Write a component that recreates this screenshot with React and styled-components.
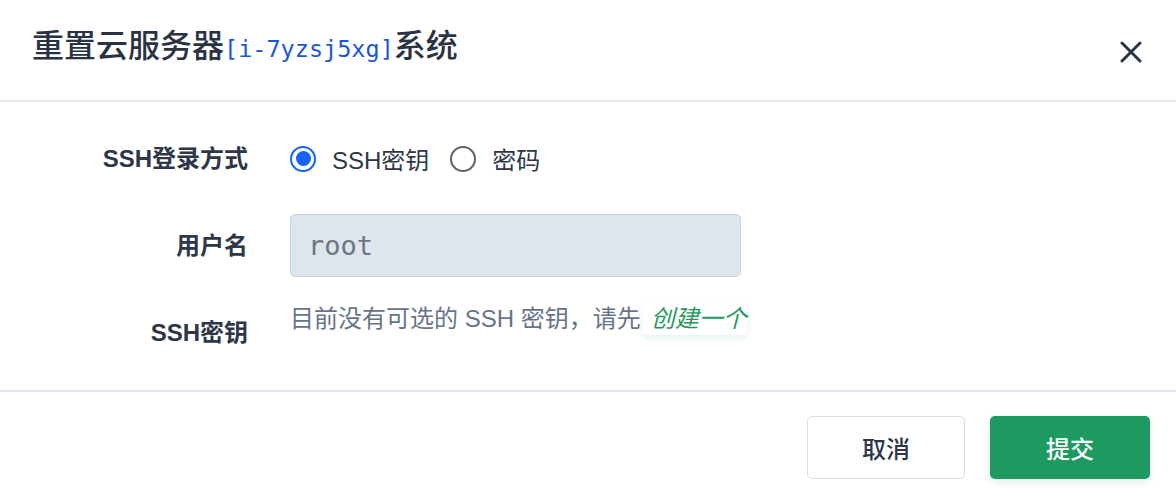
import React, { useState } from 'react';
import styled, { createGlobalStyle } from 'styled-components';

const GlobalStyle = createGlobalStyle`
  body {
    margin: 0;
    background: #fff;
    font-family: "Liberation Sans", "Noto Sans CJK SC", sans-serif;
    color: #2d3748;
  }
`;

const Modal = styled.div`
  width: 1176px;
  height: 488px;
  background: #fff;
  overflow: hidden;
`;

const ModalHeader = styled.div`
  height: 100px;
  padding: 0 32px;
  display: flex;
  align-items: center;
  justify-content: space-between;
  border-bottom: 2px solid #e0e7ee;
`;

const Title = styled.h2`
  margin: 0 0 6px;
  font-size: 32px;
  line-height: 44px;
  font-weight: 500;
  color: #2a3342;
`;

const InstanceId = styled.span`
  font-family: "DejaVu Sans Mono", monospace;
  font-size: 23.5px;
  font-weight: 400;
  color: #1b58d4;
`;

const CloseButton = styled.button`
  width: 32px;
  height: 32px;
  margin: 4px -3px 0 0;
  padding: 0;
  border: none;
  background: none;
  display: flex;
  align-items: center;
  justify-content: center;
  cursor: pointer;
`;

const ModalBody = styled.div`
  padding: 25px 0 26px;
`;

const Form = styled.div`
  display: grid;
  grid-template-columns: 248px 1fr;
  column-gap: 42px;
  row-gap: 24px;
`;

const Label = styled.div`
  text-align: right;
  font-size: 24px;
  font-weight: 600;
  color: #2d3748;
  line-height: 63px;
  height: 63px;
`;

const Control = styled.div`
  min-height: 63px;
  display: flex;
  align-items: ${(p) => (p.top ? 'flex-start' : 'center')};
`;

const RadioGroup = styled.div`
  display: flex;
  align-items: center;
`;

const RadioItem = styled.label`
  display: flex;
  align-items: center;
  font-size: 24px;
  color: #2d3748;
  cursor: pointer;
  & + & {
    margin-left: 21px;
  }
`;

const RadioDot = styled.span`
  box-sizing: border-box;
  width: 26px;
  height: 26px;
  border-radius: 50%;
  border: ${(p) => (p.checked ? '2.5px solid #1762f4' : '2px solid #5f6368')};
  margin-right: 16px;
  display: flex;
  align-items: center;
  justify-content: center;
  &::after {
    content: '';
    width: 15px;
    height: 15px;
    border-radius: 50%;
    background: ${(p) => (p.checked ? '#1762f4' : 'transparent')};
  }
`;

const TextInput = styled.input`
  box-sizing: border-box;
  width: 451px;
  height: 63px;
  padding: 0 17px;
  background: #dee5ec;
  border: 1.5px solid #c9d3dd;
  border-radius: 5px;
  font-family: "DejaVu Sans Mono", monospace;
  font-size: 27px;
  color: #6b7684;
  outline: none;
`;

const Hint = styled.div`
  font-size: 24px;
  line-height: 36px;
  color: #66748a;
`;

const CreateLink = styled.a`
  display: inline-block;
  margin-left: 2px;
  padding: 0 0 0 8px;
  line-height: 32px;
  font-style: italic;
  color: #1f9a5c;
  text-decoration: none;
  border-radius: 4px;
  box-shadow: 0 3px 6px rgba(31, 154, 92, 0.12);
  cursor: pointer;
`;

const ModalFooter = styled.div`
  border-top: 2px solid #e0e7ee;
  padding: 24px 26px 9px;
  display: flex;
  justify-content: flex-end;
  gap: 25px;
`;

const Button = styled.button`
  box-sizing: border-box;
  width: ${(p) => (p.primary ? '160px' : '158px')};
  height: 63px;
  border-radius: 5px;
  font-family: inherit;
  font-size: 24px;
  font-weight: 500;
  cursor: pointer;
  border: ${(p) => (p.primary ? 'none' : '1.5px solid #d5dde6')};
  background: ${(p) => (p.primary ? '#1e9a61' : '#fff')};
  color: ${(p) => (p.primary ? '#fff' : '#2d3748')};
  box-shadow: ${(p) => (p.primary ? '0 3px 8px rgba(30, 154, 97, 0.15)' : 'none')};
`;

const CloseIcon = () => (
  <svg width="22" height="22" viewBox="0 0 22 22">
    <path d="M2 2 L20 20 M20 2 L2 20" stroke="#2a3342" strokeWidth="3" strokeLinecap="round" />
  </svg>
);

const App = () => {
  const [method, setMethod] = useState('key');

  return (
    <Modal>
      <GlobalStyle />
      <ModalHeader>
        <Title>
          重置云服务器<InstanceId>[i-7yzsj5xg]</InstanceId>系统
        </Title>
        <CloseButton aria-label="关闭">
          <CloseIcon />
        </CloseButton>
      </ModalHeader>
      <ModalBody>
        <Form>
          <Label>SSH登录方式</Label>
          <Control>
            <RadioGroup>
              <RadioItem onClick={() => setMethod('key')}>
                <RadioDot checked={method === 'key'} />
                SSH密钥
              </RadioItem>
              <RadioItem onClick={() => setMethod('password')}>
                <RadioDot checked={method === 'password'} />
                密码
              </RadioItem>
            </RadioGroup>
          </Control>

          <Label>用户名</Label>
          <Control>
            <TextInput value="root" readOnly />
          </Control>

          <Label>SSH密钥</Label>
          <Control top>
            <Hint>
              目前没有可选的 SSH 密钥，请先
              <CreateLink>创建一个</CreateLink>
            </Hint>
          </Control>
        </Form>
      </ModalBody>
      <ModalFooter>
        <Button>取消</Button>
        <Button primary>提交</Button>
      </ModalFooter>
    </Modal>
  );
};

export default App;
